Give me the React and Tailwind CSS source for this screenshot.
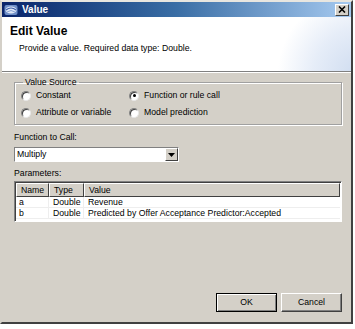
import React, { useState } from 'react';

const font = { fontFamily: '"Liberation Sans", Arial, sans-serif' };

const Radio = ({ checked, label, onClick }) => (
  <div className="flex items-center gap-[5px] h-[17px] cursor-default" onClick={onClick}>
    <span className="relative w-[10px] h-[10px] rounded-full bg-white border border-t-[#808080] border-l-[#808080] border-r-[#e8e8e8] border-b-[#e8e8e8] shadow-[inset_1px_1px_0_#404040] flex items-center justify-center">
      {checked && <span className="w-[3px] h-[3px] rounded-full bg-black" />}
    </span>
    <span className="text-[8.7px] text-black">{label}</span>
  </div>
);

const Button = ({ children, primary }) => (
  <button
    className={`w-[61px] h-[19px] text-[8.7px] text-black bg-[#d4d0c8] border ${
      primary
        ? 'border-black shadow-[inset_1px_1px_0_#fff,inset_-1px_-1px_0_#808080]'
        : 'border-t-white border-l-white border-r-[#404040] border-b-[#404040] shadow-[inset_-1px_-1px_0_#808080]'
    }`}
  >
    {children}
  </button>
);

const params = [
  { name: 'a', type: 'Double', value: 'Revenue' },
  { name: 'b', type: 'Double', value: 'Predicted by Offer Acceptance Predictor:Accepted' },
];

const App = () => {
  const [source, setSource] = useState('function');

  return (
    <div className="w-[355px] h-[329px] bg-white" style={font}>
      <div className="w-[353px] h-[324px] bg-[#d4d0c8] flex flex-col border-l-2 border-l-[#d4d0c8] border-r-2 border-r-[#404040] border-b-2 border-b-[#404040] border-t-2 border-t-[#e8e6e0]">
        {/* title bar */}
        <div className="h-[15px] flex items-center px-[2px] bg-gradient-to-r from-[#0a246a] via-[#3a6ea5] to-[#a6caf0]">
          <svg width="14" height="12" viewBox="0 0 14 12" className="mr-[4px]">
            <rect x="0.5" y="1" width="13" height="10" rx="2" fill="#6f8fc8" />
            <ellipse cx="7" cy="6" rx="5.5" ry="3.5" fill="#dfe8f6" />
            <path d="M2 6 Q7 2 12 6" stroke="#3a5ca8" strokeWidth="1.2" fill="none" />
            <path d="M3 8 Q7 5 11 8" stroke="#8aa4d6" strokeWidth="1" fill="none" />
          </svg>
          <span className="text-[10px] font-bold text-white">Value</span>
          <div className="ml-auto w-[14px] h-[12px] bg-[#d4d0c8] border border-t-white border-l-white border-r-[#404040] border-b-[#404040] flex items-center justify-center">
            <svg width="8" height="7" viewBox="0 0 8 7">
              <path d="M1 0.5 L7 6.5 M7 0.5 L1 6.5" stroke="#000" strokeWidth="1.6" />
            </svg>
          </div>
        </div>

        {/* header */}
        <div className="h-[54px] bg-white relative overflow-hidden">
          <div className="absolute right-[-40px] top-[-20px] w-[120px] h-[120px] rounded-full bg-[radial-gradient(circle_at_75%_65%,#cddbef_0%,#e6edf8_40%,#ffffff_70%)]" />
          <div className="relative pl-[8px] pt-[6px]">
            <div className="text-[12px] font-bold text-black leading-[16px]">Edit Value</div>
            <div className="text-[8.7px] text-black pl-[9px] mt-[3px]">Provide a value. Required data type: Double.</div>
          </div>
        </div>
        <div className="h-[1px] bg-[#808080]" />
        <div className="h-[1px] bg-white" />

        {/* body */}
        <div className="flex-1 flex flex-col pl-[12px] pr-[9px] pt-[4px]">
          <fieldset className="border border-[#a0a0a0] shadow-[1px_1px_0_#fff,inset_1px_1px_0_#fff] h-[48px] px-[6px] pb-[1px]">
            <legend className="text-[8.7px] text-black px-[2px] ml-[2px] leading-[10px]">Value Source</legend>
            <div className="grid grid-cols-[108px_1fr]">
              <Radio label="Constant" checked={source === 'constant'} onClick={() => setSource('constant')} />
              <Radio label="Function or rule call" checked={source === 'function'} onClick={() => setSource('function')} />
              <Radio label="Attribute or variable" checked={source === 'attribute'} onClick={() => setSource('attribute')} />
              <Radio label="Model prediction" checked={source === 'model'} onClick={() => setSource('model')} />
            </div>
          </fieldset>

          <div className="text-[8.7px] text-black mt-[6px]">Function to Call:</div>
          <div className="mt-[3px] w-[165px] h-[15px] bg-white border border-t-[#808080] border-l-[#808080] border-r-white border-b-white flex items-center">
            <span className="text-[8.7px] text-black pl-[2px] flex-1">Multiply</span>
            <div className="w-[13px] h-[13px] bg-[#d4d0c8] border border-t-white border-l-white border-r-[#404040] border-b-[#404040] flex items-center justify-center">
              <svg width="7" height="4" viewBox="0 0 7 4">
                <path d="M0 0 H7 L3.5 4 Z" fill="#000" />
              </svg>
            </div>
          </div>

          <div className="text-[8.7px] text-black mt-[5px]">Parameters:</div>
          <div className="mt-[1px] h-[41px] bg-white border border-t-[#808080] border-l-[#808080] border-r-white border-b-white shadow-[inset_1px_1px_0_#404040] p-[1px]">
            <div className="grid grid-cols-[33px_35px_1fr] text-[8.7px] text-black">
              {['Name', 'Type', 'Value'].map((h) => (
                <div
                  key={h}
                  className="h-[14px] flex items-center px-[4px] bg-[#d4d0c8] border border-t-white border-l-white border-r-[#404040] border-b-[#404040]"
                >
                  {h}
                </div>
              ))}
              {params.map((p) => (
                <React.Fragment key={p.name}>
                  <div className="h-[11px] leading-[11px] px-[3px] border-r border-b border-[#eeeeee]">{p.name}</div>
                  <div className="h-[11px] leading-[11px] px-[4px] border-r border-b border-[#eeeeee]">{p.type}</div>
                  <div className="h-[11px] leading-[11px] px-[4px] border-b border-[#eeeeee]">{p.value}</div>
                </React.Fragment>
              ))}
            </div>
          </div>

          <div className="mt-auto mb-[10px] flex justify-end gap-[4px]">
            <Button primary>OK</Button>
            <Button>Cancel</Button>
          </div>
        </div>
      </div>
    </div>
  );
};

export default App;
